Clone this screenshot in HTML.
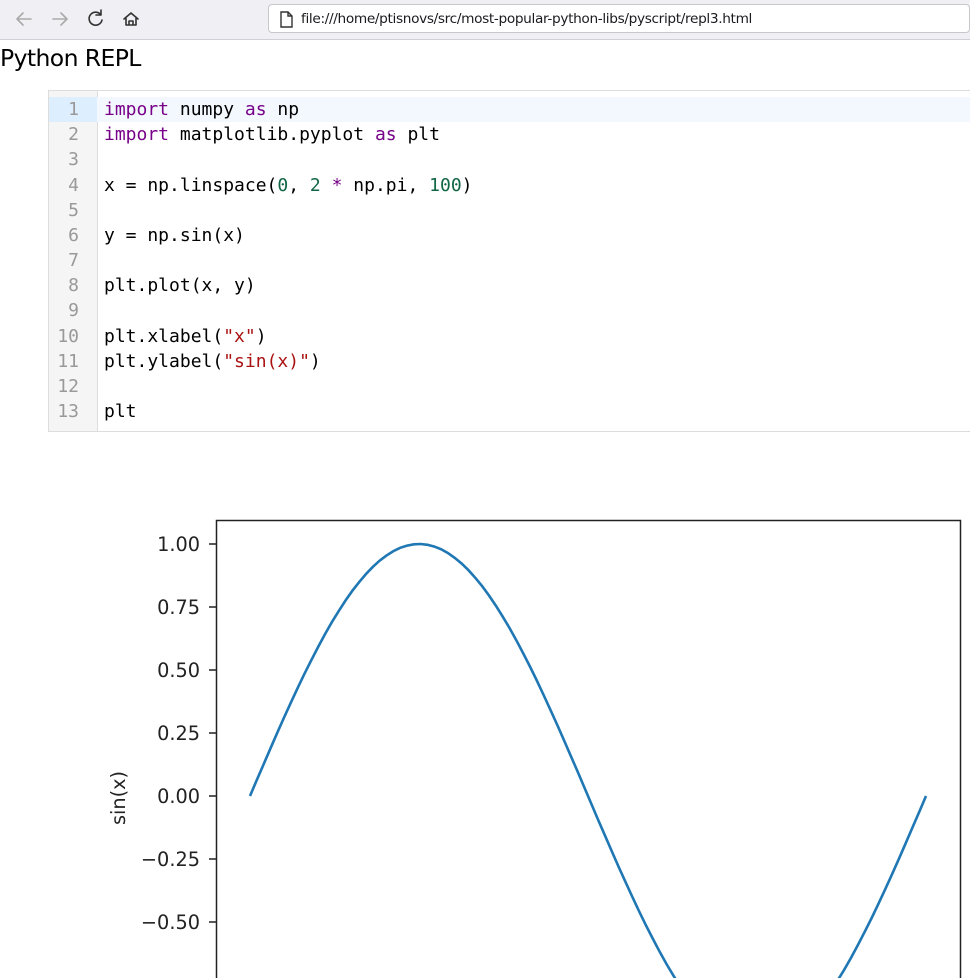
<!DOCTYPE html>
<html><head><meta charset="utf-8"><style>
body{margin:0;width:970px;height:978px;overflow:hidden;background:#fff;position:relative;font-family:"Liberation Sans","DejaVu Sans",sans-serif}
.bar{position:absolute;left:0;top:0;width:970px;height:39px;background:#f0f0f4;border-bottom:1px solid #cfcfd8}
.url{position:absolute;left:268px;top:4px;width:702px;height:29px;background:#fff;border:1px solid #c8c8cc;border-radius:4px;box-sizing:border-box}
.url span{position:absolute;left:32px;top:6px;font-size:13.7px;color:#1b1b1f;font-family:"DejaVu Sans",sans-serif;letter-spacing:-0.35px}
h1{position:absolute;left:0;top:44px;margin:0;font-weight:normal;font-size:23.5px;font-family:"DejaVu Sans",sans-serif;letter-spacing:-0.6px;color:#000}
.ed{position:absolute;left:48px;top:90px;width:922px;height:342px;border:1px solid #ddd;border-right:none;box-sizing:border-box;font-family:"DejaVu Sans Mono",monospace;font-size:18px;overflow:hidden}
.gut{position:absolute;left:0;top:0;width:48px;height:340px;background:#f5f5f5;border-right:1px solid #ddd}
.hl{position:absolute;left:0;top:6px;width:930px;height:25px;background:#f3f8fe}
.hlg{position:absolute;left:0;top:6px;width:48px;height:25px;background:#ddeeff}
.ln{position:absolute;left:0;top:6px;width:30px;text-align:right;color:#999;line-height:25.17px;font-size:18px}
.code{position:absolute;left:55px;top:6px;line-height:25.17px;white-space:pre;color:#000}
.k{color:#708}.n{color:#164}.s{color:#a11}
</style></head><body>
<div class="bar">
<svg width="260" height="39" style="position:absolute;left:0;top:0" fill="none" stroke-width="1.6" stroke-linecap="round" stroke-linejoin="round">
<path d="M31 19H17M23 13l-6 6 6 6" stroke="#aaa"/>
<path d="M53 19h14M61 13l6 6-6 6" stroke="#aaa"/>
<path d="M101 15a6.5 6.5 0 1 0 1 5M101 10v5h-5" stroke="#333"/>
<path d="M124 19l7-6 7 6M126 17v8h10v-8M129 25v-4h4v4" stroke="#333"/>
</svg>
<div class="url"><svg width="20" height="20" style="position:absolute;left:8px;top:5px" fill="none" stroke="#333" stroke-width="1.4"><path d="M4 2h7l4 4v11H4z M11 2v4h4"/></svg><span>file:///home/ptisnovs/src/most-popular-python-libs/pyscript/repl3.html</span></div>
</div>
<h1>Python REPL</h1>
<div class="ed">
<div class="gut"></div><div class="hl"></div><div class="hlg"></div>
<div class="ln">1<br>2<br>3<br>4<br>5<br>6<br>7<br>8<br>9<br>10<br>11<br>12<br>13</div>
<div class="code"><span class="k">import</span> numpy <span class="k">as</span> np
<span class="k">import</span> matplotlib.pyplot <span class="k">as</span> plt

x = np.linspace(<span class="n">0</span>, <span class="n">2</span> <span class="k">*</span> np.pi, <span class="n">100</span>)

y = np.sin(x)

plt.plot(x, y)

plt.xlabel(<span class="s">"x"</span>)
plt.ylabel(<span class="s">"sin(x)"</span>)

plt</div>
</div>
<svg width="970" height="978" style="position:absolute;left:0;top:0" font-family="DejaVu Sans,sans-serif" font-size="19.3" fill="#222">
<path d="M216.5 978V520.5H960.5V978" fill="none" stroke="#222" stroke-width="1.5"/>
<g stroke="#222" stroke-width="1.5">
<path d="M209 544h7M209 607h7M209 670h7M209 733h7M209 796h7M209 859h7M209 922h7"/></g>
<g text-anchor="end">
<text x="200" y="551">1.00</text><text x="200" y="614">0.75</text><text x="200" y="677">0.50</text><text x="200" y="740">0.25</text><text x="200" y="803">0.00</text><text x="200" y="866">−0.25</text><text x="200" y="929">−0.50</text></g>
<text transform="translate(125,798) rotate(-90)" text-anchor="middle">sin(x)</text>
<path id="sine" fill="none" stroke="#1f77b4" stroke-width="2.6"/>
</svg>
<script>
var d="";for(var i=0;i<=99;i++){var t=2*Math.PI*i/99;var x=250+676*i/99;var y=796-252*Math.sin(t);d+=(i?"L":"M")+x.toFixed(1)+" "+y.toFixed(1);}
document.getElementById("sine").setAttribute("d",d);
</script>
</body></html>
